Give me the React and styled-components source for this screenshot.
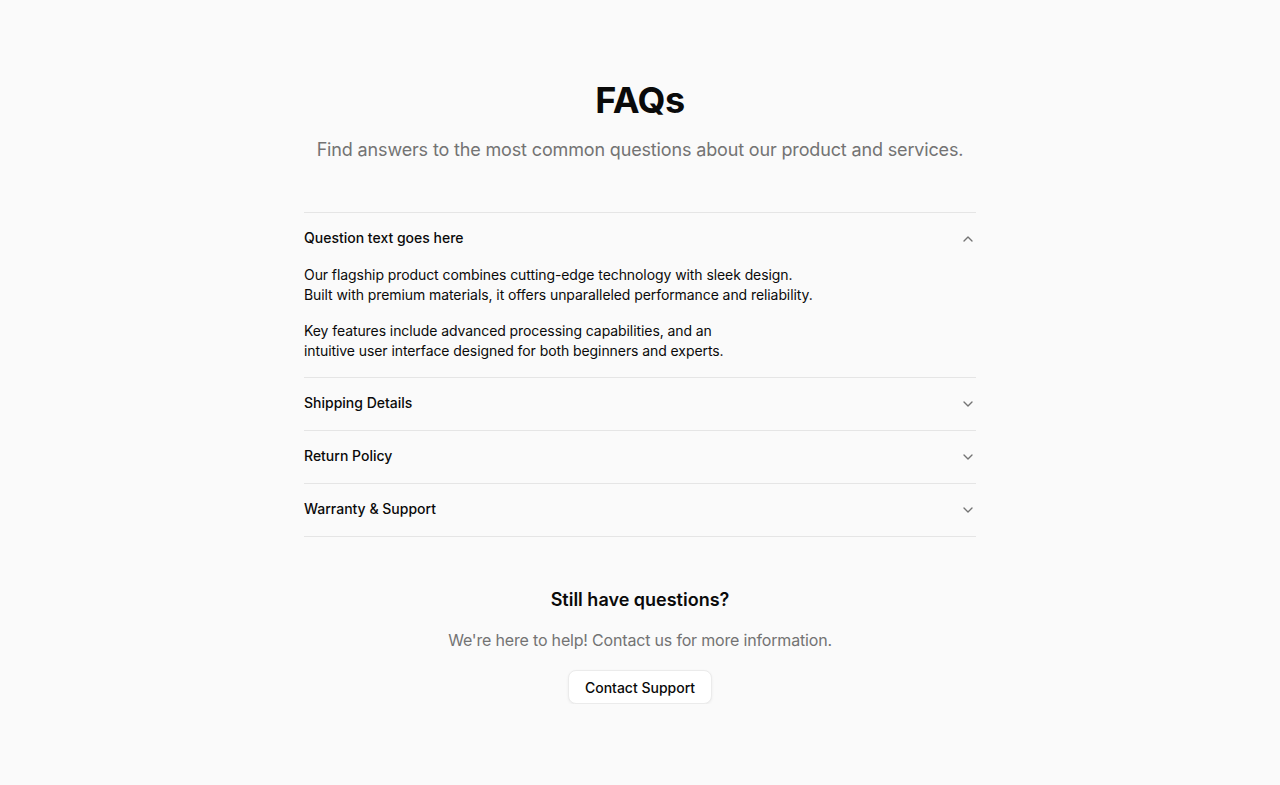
import React, { useState } from 'react';
import styled, { createGlobalStyle } from 'styled-components';
import { ChevronDown, ChevronUp } from 'lucide-react';

const GlobalStyle = createGlobalStyle`
  * { box-sizing: border-box; }
  body {
    margin: 0;
    background: #fafafa;
    font-family: "Inter", "Noto Sans", sans-serif;
    color: #0a0a0a;
  }
`;

const faqs = [
  {
    q: 'Question text goes here',
    a: [
      ['Our flagship product combines cutting-edge technology with sleek design.', 'Built with premium materials, it offers unparalleled performance and reliability.'],
      ['Key features include advanced processing capabilities, and an', 'intuitive user interface designed for both beginners and experts.'],
    ],
  },
  { q: 'Shipping Details', a: [] },
  { q: 'Return Policy', a: [] },
  { q: 'Warranty & Support', a: [] },
];

function App() {
  const [open, setOpen] = useState(0);
  return (
    <>
      <GlobalStyle />
      <Page>
        <Header>
          <Title>FAQs</Title>
          <Subtitle>Find answers to the most common questions about our product and services.</Subtitle>
        </Header>
        <Accordion>
          {faqs.map((item, i) => (
            <Item key={item.q}>
              <Trigger onClick={() => setOpen(open === i ? -1 : i)}>
                <span>{item.q}</span>
                {open === i ? <ChevronUp size={16} color="#737373" /> : <ChevronDown size={16} color="#737373" />}
              </Trigger>
              {open === i && (
                <Content>
                  {item.a.map((para, j) => (
                    <p key={j}>
                      {para[0]}
                      <br />
                      {para[1]}
                    </p>
                  ))}
                </Content>
              )}
            </Item>
          ))}
        </Accordion>
        <Contact>
          <ContactTitle>Still have questions?</ContactTitle>
          <ContactText>We're here to help! Contact us for more information.</ContactText>
          <Button>Contact Support</Button>
        </Contact>
      </Page>
    </>
  );
}

const Page = styled.main`
  max-width: 672px;
  margin: 0 auto;
  padding: 80px 0 0;
`;

const Header = styled.header`
  text-align: center;
  margin-bottom: 48px;
`;

const Title = styled.h1`
  font-size: 36px;
  line-height: 40px;
  font-weight: 700;
  margin: 0 0 16px;
  letter-spacing: -0.5px;
`;

const Subtitle = styled.p`
  font-size: 18px;
  line-height: 28px;
  color: #737373;
  letter-spacing: -0.15px;
  margin: 0;
`;

const Accordion = styled.div`
  border-top: 1px solid #e5e5e5;
`;

const Item = styled.div`
  border-bottom: 1px solid #e5e5e5;
`;

const Trigger = styled.button`
  width: 100%;
  height: 52px;
  display: flex;
  align-items: center;
  justify-content: space-between;
  padding: 0 0 3px;
  background: none;
  border: none;
  cursor: pointer;
  font-family: inherit;
  font-size: 14px;
  font-weight: 500;
  color: #0a0a0a;
  text-align: left;
  svg {
    margin-top: 3px;
  }
`;

const Content = styled.div`
  padding: 0 0 16px;
  font-size: 14px;
  line-height: 20px;
  letter-spacing: -0.08px;
  color: #0a0a0a;
  p {
    margin: 0 0 16px;
  }
  p:last-child {
    margin-bottom: 0;
  }
`;

const Contact = styled.section`
  display: flex;
  flex-direction: column;
  align-items: center;
  margin-top: 49px;
`;

const ContactTitle = styled.h2`
  font-size: 18px;
  line-height: 28px;
  font-weight: 600;
  margin: 0 0 14px;
`;

const ContactText = styled.p`
  font-size: 16px;
  line-height: 24px;
  color: #737373;
  letter-spacing: -0.18px;
  margin: 0 0 18px;
`;

const Button = styled.button`
  height: 34px;
  padding: 0 16px;
  border: 1px solid #ebebeb;
  border-radius: 8px;
  background: #fff;
  box-shadow: 0 1px 3px rgba(0, 0, 0, 0.06);
  font-family: inherit;
  font-size: 14px;
  font-weight: 500;
  color: #0a0a0a;
  cursor: pointer;
`;

export default App;
